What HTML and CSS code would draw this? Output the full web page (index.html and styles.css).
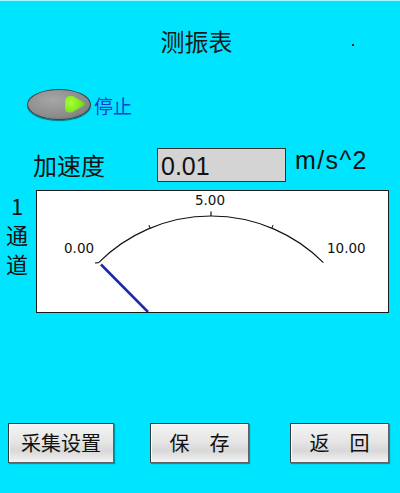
FILE: index.html
```html
<!DOCTYPE html>
<html lang="zh">
<head>
<meta charset="utf-8">
<link rel="stylesheet" href="styles.css">
</head>
<body>
<div class="screen">
  <div class="title">测振表</div>
  <span class="dot"></span>
  <div class="toggle-row">
    <div class="toggle"><span class="knob"></span></div>
    <span class="toggle-label">停止</span>
  </div>
  <div class="measure-row">
    <span class="measure-label">加速度</span>
    <div class="value-box">0.01</div>
    <span class="unit">m/s^2</span>
  </div>
  <div class="meter-row">
    <div class="channel">
      <span class="ch">1</span>
      <span class="ch">通</span>
      <span class="ch">道</span>
    </div>
    <div class="meter">
      <svg class="gauge" width="351" height="121" viewBox="37 191 351 121">
        <path d="M98.6 262.6 A159 159 0 0 1 323.4 262.6" fill="none" stroke="#111" stroke-width="1.1"/>
        <line x1="211" y1="216" x2="211" y2="211.5" stroke="#111" stroke-width="1.2"/>
        <line x1="150.2" y1="228.1" x2="148.9" y2="225.1" stroke="#111" stroke-width="1.1"/>
        <line x1="271.8" y1="228.1" x2="273.1" y2="225.1" stroke="#111" stroke-width="1.1"/>
        <line x1="98.6" y1="262.6" x2="95" y2="263" stroke="#111" stroke-width="1.1"/>
        <text x="210" y="205" class="gtext" text-anchor="middle">5.00</text>
        <text x="64" y="253" class="gtext">0.00</text>
        <text x="327" y="253" class="gtext">10.00</text>
        <line x1="101" y1="264.5" x2="148" y2="312" stroke="#1c2aa8" stroke-width="2.6"/>
      </svg>
    </div>
  </div>
  <div class="button-row">
    <div class="btn btn-wide">采集设置</div>
    <div class="btn">保　存</div>
    <div class="btn">返　回</div>
  </div>
</div>
</body>
</html>
```
FILE: styles.css
```css
html, body {
  margin: 0;
  padding: 0;
}
body {
  background: #00e5ff;
}
.screen {
  position: relative;
  width: 400px;
  height: 493px;
  overflow: hidden;
  background: #00e5ff;
  border-top: 1px solid #a8f6ff;
  box-sizing: border-box;
  display: flex;
  flex-direction: column;
  font-family: "Noto Sans CJK SC", "Liberation Sans", sans-serif;
  color: #111;
}
.title {
  margin-top: 26px;
  padding-right: 7px;
  text-align: center;
  font-size: 24px;
  line-height: 28px;
  height: 28px;
  color: #1a1a1a;
}
.dot {
  position: absolute;
  left: 352px;
  top: 43px;
  width: 2px;
  height: 2px;
  background: #222;
}
.toggle-row {
  margin-top: 33px;
  margin-left: 27px;
  display: flex;
  align-items: center;
  height: 32px;
}
.toggle {
  width: 64px;
  height: 31px;
  box-sizing: border-box;
  border-radius: 50%;
  border: 1px solid #3e3e3e;
  background: radial-gradient(ellipse at 40% 35%, #a6a6a6 0%, #8c8c8c 60%, #6a6a6a 100%);
  box-shadow: 0 1px 1px rgba(0,0,0,0.5);
  display: flex;
  align-items: center;
  justify-content: flex-end;
  padding-right: 5px;
}
.knob {
  width: 20px;
  height: 17px;
  background: radial-gradient(circle at 30% 40%, #a8ff3a 0%, #7ee81a 55%, #5cc000 100%);
  clip-path: polygon(0 0, 35% 0, 100% 45%, 100% 55%, 35% 100%, 0 100%);
  border-radius: 5px 0 0 5px;
}
.toggle-label {
  margin-left: 3px;
  font-size: 19px;
  line-height: 24px;
  color: #1a3ad6;
  padding-top: 3px;
}
.measure-row {
  margin-top: 28px;
  display: flex;
  align-items: flex-start;
  height: 34px;
}
.measure-label {
  margin-left: 33px;
  width: 124px;
  font-size: 24px;
  line-height: 34px;
}
.value-box {
  width: 129px;
  height: 34px;
  box-sizing: border-box;
  border: 1px solid #333;
  background: #d4d4d4;
  font-family: "Liberation Sans", Arial, sans-serif;
  font-size: 25px;
  line-height: 35px;
  padding-left: 3px;
  color: #111;
}
.unit {
  margin-left: 9px;
  font-family: "Liberation Sans", Arial, sans-serif;
  font-size: 25px;
  letter-spacing: 1.4px;
  line-height: 24px;
  color: #111;
}
.meter-row {
  margin-top: 8px;
  display: flex;
  align-items: flex-start;
  height: 123px;
}
.channel {
  width: 36px;
  padding-top: 1px;
  padding-right: 2px;
  box-sizing: border-box;
  display: flex;
  flex-direction: column;
  align-items: center;
}
.ch {
  display: block;
  height: 29px;
  font-size: 22px;
  line-height: 29px;
}
.meter {
  width: 353px;
  height: 123px;
  box-sizing: border-box;
  border: 1px solid #1a1a1a;
  background: #fff;
  overflow: hidden;
}
.gauge {
  display: block;
}
.gtext {
  font-family: "DejaVu Sans", Verdana, sans-serif;
  font-size: 13.5px;
  fill: #111;
}
.button-row {
  margin-top: 110px;
  display: flex;
  padding-left: 8px;
  gap: 36px;
}
.btn {
  width: 99px;
  height: 40px;
  box-sizing: border-box;
  border: 1px solid #2e3a40;
  border-right-color: #5a6468;
  border-bottom-color: #5a6468;
  background: linear-gradient(to bottom, #f4f4f4 0%, #e6e6e6 45%, #d8d8d8 70%, #f2f2f2 100%);
  box-shadow: inset 1px 1px 0 #fff, 1px 1px 1px rgba(0,0,0,0.35);
  font-size: 20px;
  line-height: 38px;
  text-align: center;
  color: #111;
}
.btn-wide {
  width: 106px;
}
.btn + .btn + .btn {
  margin-left: 5px;
}
```
